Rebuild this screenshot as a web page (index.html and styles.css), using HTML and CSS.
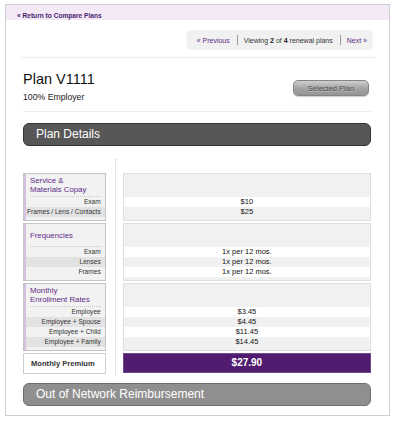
FILE: index.html
```html
<!DOCTYPE html>
<html>
<head>
<meta charset="utf-8">
<link rel="stylesheet" href="styles.css">
</head>
<body>
<div class="frame">
  <div class="band"><a class="back">« Return to Compare Plans</a></div>
  <div class="pager-row">
    <div class="pager">
      <a class="plink">« Previous</a>
      <span class="sep"></span>
      <span class="viewing">Viewing <b>2</b> of <b>4</b> renewal plans</span>
      <span class="sep"></span>
      <a class="plink">Next »</a>
    </div>
  </div>
  <div class="dots"></div>
  <div class="content">
    <div class="plan-head">
      <div class="plan-title">
        <h1>Plan V1111</h1>
        <p>100% Employer</p>
      </div>
      <button class="selected">Selected Plan</button>
    </div>
    <div class="bar dark">Plan Details</div>
    <div class="grid">
      <div class="labels">
        <div class="lsec">
          <div class="lhead">Service &amp;<br>Materials Copay</div>
          <div class="lrow">Exam</div>
          <div class="lrow">Frames / Lens / Contacts</div>
        </div>
        <div class="lsec">
          <div class="lhead">Frequencies</div>
          <div class="lrow">Exam</div>
          <div class="lrow">Lenses</div>
          <div class="lrow">Frames</div>
        </div>
        <div class="lsec">
          <div class="lhead">Monthly<br>Enrollment Rates</div>
          <div class="lrow">Employee</div>
          <div class="lrow">Employee + Spouse</div>
          <div class="lrow">Employee + Child</div>
          <div class="lrow">Employee + Family</div>
        </div>
        <div class="lprem">Monthly Premium</div>
      </div>
      <div class="values">
        <div class="vsec">
          <div class="vhead"></div>
          <div class="vrow">$10</div>
          <div class="vrow">$25</div>
        </div>
        <div class="vsec">
          <div class="vhead"></div>
          <div class="vrow">1x per 12 mos.</div>
          <div class="vrow">1x per 12 mos.</div>
          <div class="vrow">1x per 12 mos.</div>
        </div>
        <div class="vsec">
          <div class="vhead"></div>
          <div class="vrow">$3.45</div>
          <div class="vrow">$4.45</div>
          <div class="vrow">$11.45</div>
          <div class="vrow">$14.45</div>
        </div>
        <div class="vprem">$27.90</div>
      </div>
    </div>
    <div class="bar gray">Out of Network Reimbursement</div>
  </div>
</div>
</body>
</html>
```
FILE: styles.css
```css
* { box-sizing: border-box; }
html, body { margin: 0; padding: 0; background: #fff; }
body { font-family: "Liberation Sans", Arial, Helvetica, sans-serif; color: #222; }

.frame {
  width: 385px;
  margin: 4px 0 0 5px;
  border: 1px solid #cfcfcf;
  background: #fff;
}

.band {
  height: 15px;
  line-height: 15px;
  background: #f3e9f7;
  padding-left: 11px;
}
.back {
  font-size: 6.6px;
  font-weight: bold;
  color: #4a1d6e;
  white-space: nowrap;
}

.pager-row {
  display: flex;
  justify-content: flex-end;
  padding: 10px 16px 0 0;
}
.pager {
  display: flex;
  align-items: center;
  height: 20px;
  padding: 0 6px 0 11px;
  background: #f1f1f1;
  border-radius: 6px;
  font-size: 7px;
  color: #333;
  white-space: nowrap;
}
.plink { color: #5a2a86; }
.sep {
  width: 1px;
  height: 10px;
  background: #999;
  margin: 0 6px 0 7px;
}
.viewing b { font-weight: bold; color: #222; }

.dots {
  margin: 7px 14px 0 14px;
  border-top: 1px dotted #ddd;
}

.content { padding: 0 18px 9px 17px; }

.plan-head {
  display: flex;
  justify-content: space-between;
  align-items: flex-start;
  padding-top: 13px;
  padding-bottom: 8px;
  border-bottom: 1px solid #eee;
}
.plan-title h1 {
  margin: 0;
  font-size: 14.5px;
  line-height: 17px;
  font-weight: normal;
  color: #111;
}
.plan-title p {
  margin: 4px 0 0;
  font-size: 8.7px;
  line-height: 11px;
  color: #222;
}
.selected {
  margin: 9px 2px 0 0;
  width: 76px;
  height: 16px;
  padding: 0;
  border: 1px solid #858585;
  border-radius: 5px;
  background: linear-gradient(#cfcfcf, #a2a2a2 55%, #959595);
  font-family: "Liberation Sans", Arial, sans-serif;
  font-size: 7.5px;
  color: #4e4e4e;
  text-shadow: 0 1px 0 #c0c0c0;
  box-shadow: 0 1px 1px rgba(0,0,0,0.2);
}

.bar {
  height: 23px;
  line-height: 21px;
  border-radius: 6px;
  padding-left: 12px;
  font-size: 12px;
  color: #fff;
}
.bar.dark {
  margin-top: 11px;
  background: #575757;
  border: 1px solid #333;
}
.bar.gray {
  margin-top: 8px;
  background: #8f8f8f;
  border: 1px solid #6e6e6e;
}

.grid {
  display: flex;
  margin-top: 13px;
}
.labels {
  width: 83px;
  padding-top: 14px;
}
.values {
  width: 257px;
  margin-left: 9px;
  border-left: 1px dotted #ccc;
  padding: 14px 0 2px 7px;
}

.lsec {
  border: 1px solid #c4c4c4;
  box-shadow: inset 2px 0 0 #d3c1df;
  background: #f2f2f2;
  margin-bottom: 2px;
  padding-bottom: 3px;
}
.lhead {
  height: 23px;
  margin: 0 4px 0 6px;
  display: flex;
  align-items: center;
  border-bottom: 1px dotted #c8c8c8;
  color: #5c2b88;
  font-size: 7.8px;
  line-height: 9px;
}
.lrow {
  height: 10px;
  line-height: 10px;
  text-align: right;
  padding-right: 4px;
  margin-left: 2px;
  font-size: 6.6px;
  color: #333;
  white-space: nowrap;
}
.lrow:nth-child(odd) { background: #e2e2e2; }

.lprem {
  height: 21px;
  line-height: 19px;
  border: 1px solid #cfcfcf;
  background: #fff;
  padding-left: 7px;
  font-size: 7.6px;
  font-weight: bold;
  color: #333;
}

.vsec {
  border: 1px solid #dedede;
  background: #f1f1f1;
  margin-bottom: 2px;
  padding-bottom: 3px;
}
.vhead { height: 23px; }
.vrow {
  height: 10px;
  line-height: 10px;
  text-align: center;
  font-size: 7.5px;
  color: #111;
  background: #fff;
}
.vrow:nth-child(odd) { background: #f1f1f1; }

.vprem {
  height: 20px;
  line-height: 18px;
  background: #511c70;
  border: 1px solid #6e4a8c;
  text-align: center;
  color: #fff;
  font-weight: bold;
  font-size: 10px;
}
```
